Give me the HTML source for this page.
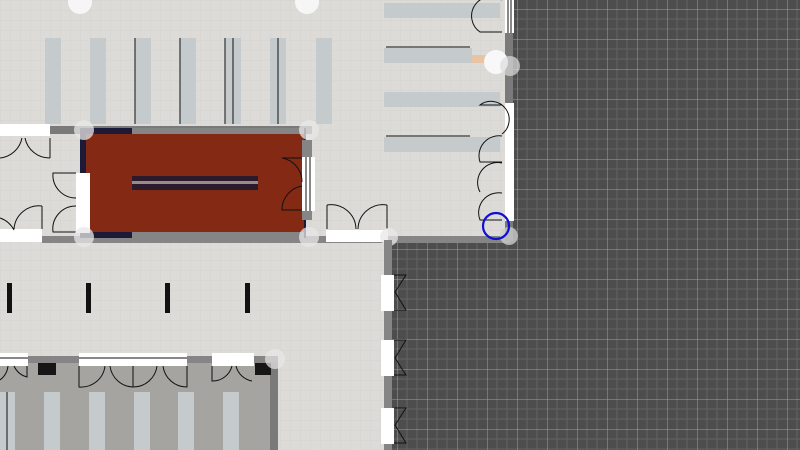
<!DOCTYPE html>
<html><head><style>html,body{margin:0;padding:0;width:800px;height:450px;overflow:hidden;background:#dcdbd7}</style></head>
<body>
<svg width="800" height="450" xmlns="http://www.w3.org/2000/svg">
<defs>
<pattern id="lg" width="10" height="10" patternUnits="userSpaceOnUse">
<rect width="10" height="10" fill="#dcdbd7"/><path d="M0 0H10M0 0V10" stroke="#d4d3cf" stroke-width="1"/></pattern>
<pattern id="dg" x="7" y="9" width="30" height="30" patternUnits="userSpaceOnUse">
<rect width="30" height="30" fill="#4d4d4d"/>
<path d="M10 0V30M20 0V30M0 10H30M0 20H30" stroke="#626262" stroke-width="1"/>
<path d="M0 0H30M0 0V30" stroke="#a0a0a0" stroke-width="1"/></pattern>
</defs>
<rect width="800" height="450" fill="url(#lg)"/>
<path d="M510 0H800V450H390V240H510Z" fill="url(#dg)"/>
<circle cx="80" cy="2" r="12" fill="#f6f6f6"/><circle cx="307" cy="2" r="12" fill="#f6f6f6"/>
<g fill="#c5cacc">
<rect x="45" y="38" width="16" height="86"/><rect x="90" y="38" width="16" height="86"/>
<rect x="135" y="38" width="16" height="86"/><rect x="180" y="38" width="16" height="86"/>
<rect x="225" y="38" width="16" height="86"/><rect x="270" y="38" width="16" height="86"/>
<rect x="316" y="38" width="16" height="86"/>
<rect x="384" y="3" width="116" height="15"/><rect x="384" y="48" width="88" height="15"/>
<rect x="384" y="92" width="116" height="15"/><rect x="384" y="137" width="116" height="15"/>
</g>
<rect x="472" y="55" width="14" height="8" fill="#e8c4a4"/>
<g stroke="#111" stroke-width="1">
<path d="M135 38V124M180 38V124M225 38V124M233 38V124M278 38V124M386 47H470M386 136H470"/>
</g>
<rect x="50" y="126" width="262" height="8" fill="#7a7a7a"/>
<rect x="42" y="236" width="468" height="7" fill="#858585"/>
<rect x="0" y="124" width="50" height="12" fill="#fff"/>
<rect x="0" y="229" width="42" height="13" fill="#fff"/>
<rect x="80" y="128" width="226" height="110" fill="#1c1a36"/>
<rect x="86" y="134" width="218" height="98" fill="#842914"/>
<rect x="132" y="176" width="126" height="14" fill="#2a1a2c"/>
<rect x="132" y="181" width="126" height="3" fill="#9a8a88"/>
<rect x="132" y="128" width="172" height="6" fill="#858585"/>
<rect x="132" y="232" width="172" height="6" fill="#858585"/>
<rect x="302" y="140" width="10" height="80" fill="#858585"/>
<rect x="76" y="173" width="14" height="60" fill="#fff"/>
<rect x="302" y="157" width="13" height="54" fill="#fff"/>
<path d="M306 157V211M310 157V211" stroke="#111"/>
<rect x="326" y="230" width="62" height="12" fill="#fff"/>
<g fill="none" stroke="#111" stroke-width="1">
<path d="M0 158A25 25 0 0 0 22 138M50 158V138M50 158A25 25 0 0 1 25 138"/>
<path d="M76 173H53A23 23 0 0 0 76 198M76 232H53A23 23 0 0 1 76 206"/>
<path d="M0 218A25 25 0 0 1 14 230M42 206V229M42 206A25 25 0 0 0 14 229"/>
<path d="M327 205V229M327 205A25 25 0 0 1 356 229M387 205V229M387 205A25 25 0 0 0 358 229"/>
<path d="M302 158H282A24 24 0 0 1 302 182M302 210H282A24 24 0 0 1 302 186"/>
</g>
<g fill="#e8e8e8" opacity="0.75"><circle cx="84" cy="130" r="10"/><circle cx="309" cy="130" r="10"/><circle cx="84" cy="237" r="10"/><circle cx="309" cy="237" r="10"/><circle cx="389" cy="237" r="9"/></g>
<rect x="505" y="33" width="8" height="70" fill="#7a7a7a"/>
<rect x="505" y="0" width="9" height="33" fill="#fff"/><path d="M508 0V33M511 0V33" stroke="#111"/>
<rect x="505" y="103" width="9" height="118" fill="#fff"/>
<rect x="505" y="221" width="8" height="20" fill="#7a7a7a"/>
<g fill="none" stroke="#111"><path d="M502 0A18 18 0 0 0 480 32H502M502 105H480A18 18 0 0 1 502 134M502 136A20 20 0 0 0 480 162H502M502 163A20 20 0 0 0 480 192M502 193A20 20 0 0 0 480 220H502"/></g>
<circle cx="496" cy="62" r="12" fill="#f8f8f8"/><circle cx="510" cy="66" r="10" fill="#ddd" opacity="0.7"/>
<circle cx="509" cy="236" r="9" fill="#ccc" opacity="0.8"/>
<circle cx="496" cy="226" r="13" fill="none" stroke="#1010d0" stroke-width="2.2"/>
<rect x="384" y="240" width="8" height="210" fill="#858585"/>
<g fill="#fff"><rect x="381" y="275" width="13" height="36"/><rect x="381" y="340" width="13" height="36"/><rect x="381" y="408" width="13" height="36"/></g>
<g fill="none" stroke="#111"><path d="M394 275H406L395 292L406 310H394M394 340H406L395 358L406 375H394M394 408H406L395 425L406 443H394"/></g>
<g fill="#111"><rect x="7" y="283" width="5" height="30"/><rect x="86" y="283" width="5" height="30"/><rect x="165" y="283" width="5" height="30"/><rect x="245" y="283" width="5" height="30"/></g>
<rect x="0" y="362" width="272" height="88" fill="#a6a4a0"/>
<rect x="270" y="360" width="8" height="90" fill="#7a7a7a"/>
<rect x="0" y="356" width="278" height="7" fill="#868484"/>
<g fill="#fff"><rect x="0" y="353" width="28" height="13"/><rect x="79" y="353" width="108" height="13"/><rect x="212" y="353" width="42" height="13"/></g>
<path d="M0 358H28M79 358H187" stroke="#111"/>
<rect x="38" y="363" width="18" height="12" fill="#161616"/><rect x="255" y="363" width="16" height="12" fill="#161616"/>
<g fill="none" stroke="#111"><path d="M79 366V387A24 24 0 0 0 105 366M133 366V387A24 24 0 0 1 110 366M133 387A24 24 0 0 0 157 366M187 366V387A24 24 0 0 1 163 366M212 366V381A20 20 0 0 0 232 366M252 381A20 20 0 0 1 236 366M0 380A20 20 0 0 0 8 366M27 366V377A20 20 0 0 1 14 366"/></g>
<circle cx="275" cy="359" r="10" fill="#e8e8e8" opacity="0.7"/>
<g fill="#c5cacc"><rect x="0" y="392" width="15" height="58"/><rect x="44" y="392" width="16" height="58"/><rect x="89" y="392" width="16" height="58"/><rect x="134" y="392" width="16" height="58"/><rect x="178" y="392" width="16" height="58"/><rect x="223" y="392" width="16" height="58"/></g>
<path d="M7 392V450" stroke="#111"/>
</svg>
</body></html>
